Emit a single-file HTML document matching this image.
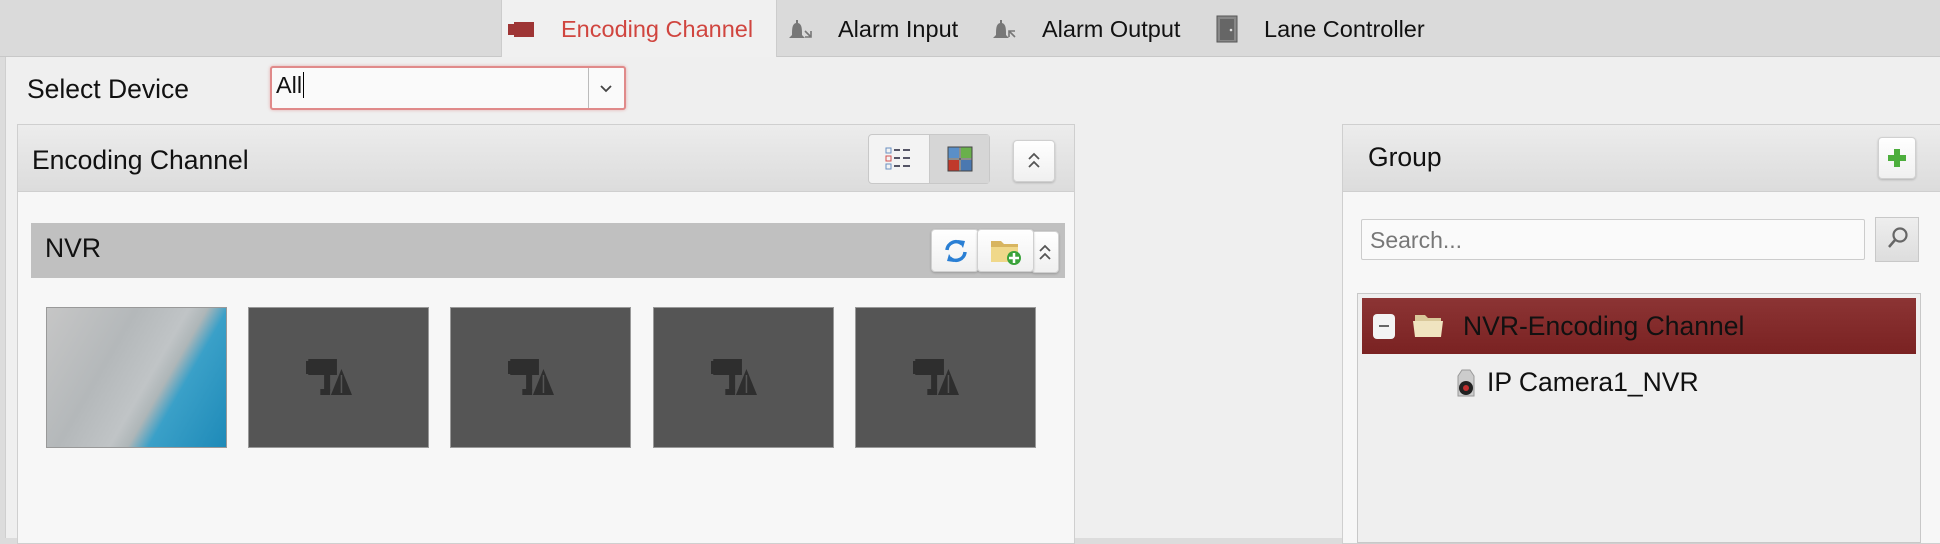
<!DOCTYPE html>
<html><head><meta charset="utf-8"><style>
*{box-sizing:border-box;margin:0;padding:0}
body{width:1940px;height:538px;overflow:hidden;background:#dcdcdc;font-family:"Liberation Sans",Arial,sans-serif;color:#111;position:relative}
.a{position:absolute}
.tabbar{left:0;top:0;width:1940px;height:57px;background:#dadada;border-bottom:1px solid #c8c8c8}
.tab{top:0;height:58px;background:#f0f0f0;left:501px;width:276px;border-left:1px solid #ccc;border-right:1px solid #ccc}
.t{font-size:26.5px;white-space:nowrap}
.tt{font-size:23.5px;white-space:nowrap}
.content{left:5px;top:57px;width:1935px;height:481px;background:#efefef;border-left:1px solid #cfcfcf}
.panel{border:1px solid #cfcfcf;background:#f7f7f7}
.hdr{background:linear-gradient(#ececec,#dcdcdc);border-bottom:1px solid #cfcfcf}
.btn{background:linear-gradient(#fff,#f0f0f0);border:1px solid #d0d0d0;border-radius:4px;box-shadow:0 1px 2px rgba(0,0,0,.2)}
.thumb{top:307px;width:181px;height:141px;background:#555;border:1px solid #999}
</style></head><body>
<div class="a tabbar"></div>
<div class="a tab"></div>
<svg class="a" style="left:506px;top:20px" width="32" height="20"><rect x="8" y="2" width="20" height="15" fill="#9e3535"/><rect x="2" y="4" width="6" height="11" fill="#9e3535"/></svg>
<div class="a tt" style="left:561px;top:16px;color:#d0453f">Encoding Channel</div>
<svg class="a" style="left:788px;top:17px" width="28" height="26"><path d="M8 3h2v3c4 1 4 6 4 12l3 3H1l3-3c0-6 0-11 4-12z" fill="#777"/><path d="M17 14l6 6M23 14v6h-6" stroke="#777" stroke-width="1.6" fill="none"/></svg>
<div class="a tt" style="left:838px;top:16px">Alarm Input</div>
<svg class="a" style="left:992px;top:17px" width="28" height="26"><path d="M8 3h2v3c4 1 4 6 4 12l3 3H1l3-3c0-6 0-11 4-12z" fill="#777"/><path d="M17 14l6 6M17 20v-6h6" stroke="#777" stroke-width="1.6" fill="none"/></svg>
<div class="a tt" style="left:1042px;top:16px">Alarm Output</div>
<svg class="a" style="left:1216px;top:15px" width="22" height="28"><rect x="1" y="1" width="20" height="26" fill="#888" stroke="#555"/><rect x="4" y="4" width="14" height="21" fill="#666"/><circle cx="15" cy="15" r="1.3" fill="#ddd"/></svg>
<div class="a tt" style="left:1264px;top:16px">Lane Controller</div>

<div class="a content"></div>
<div class="a t" style="left:27px;top:74px">Select Device</div>
<div class="a" style="left:270px;top:66px;width:356px;height:44px;background:#fafafa;border:2px solid #e08a8a;border-radius:3px;box-shadow:0 0 3px rgba(220,80,80,.4)"></div>
<div class="a tt" style="left:276px;top:72px">All<span style="border-left:1.5px solid #000;margin-left:1px"></span></div>
<div class="a" style="left:588px;top:68px;width:1px;height:40px;background:#bbb"></div>
<svg class="a" style="left:599px;top:84px" width="14" height="10"><path d="M2 2l5 5 5-5" stroke="#444" stroke-width="1.8" fill="none"/></svg>

<div class="a panel" style="left:17px;top:124px;width:1058px;height:420px"></div>
<div class="a hdr" style="left:18px;top:125px;width:1056px;height:67px"></div>
<div class="a t" style="left:32px;top:145px">Encoding Channel</div>
<div class="a" style="left:868px;top:134px;width:122px;height:50px;border:1px solid #c8c8c8;border-radius:4px;background:#f3f3f3"></div>
<div class="a" style="left:929px;top:135px;width:60px;height:48px;background:#d6d6d6;border-left:1px solid #c8c8c8"></div>
<svg class="a" style="left:884px;top:146px" width="30" height="26"><rect x="2" y="2" width="5" height="5" fill="none" stroke="#6a8fc0"/><rect x="2" y="10" width="5" height="5" fill="none" stroke="#d05050"/><rect x="2" y="18" width="5" height="5" fill="none" stroke="#6a8fc0"/><g stroke="#556" stroke-width="2"><path d="M10 4h6M19 4h7M10 12h6M19 12h7M10 20h6M19 20h7"/></g></svg>
<svg class="a" style="left:947px;top:146px" width="26" height="26"><rect x="1" y="1" width="11" height="11" fill="#5a8fc8"/><rect x="14" y="1" width="11" height="11" fill="#6ab04c"/><rect x="1" y="14" width="11" height="11" fill="#c0392b"/><rect x="14" y="14" width="11" height="11" fill="#4a78b0"/><path d="M1 1h24v24H1zM13 1v24M1 13h24" stroke="#444" fill="none"/></svg>
<div class="a btn" style="left:1013px;top:140px;width:42px;height:42px"></div>
<svg class="a" style="left:1026px;top:150px" width="16" height="22"><path d="M3 9l5-5 5 5M3 17l5-5 5 5" stroke="#555" stroke-width="1.8" fill="none"/></svg>

<div class="a" style="left:31px;top:223px;width:1034px;height:55px;background:#c0c0c0"></div>
<div class="a t" style="left:45px;top:233px">NVR</div>
<div class="a btn" style="left:1031px;top:231px;width:28px;height:42px"></div>
<svg class="a" style="left:1037px;top:242px" width="16" height="22"><path d="M3 9l5-5 5 5M3 17l5-5 5 5" stroke="#555" stroke-width="1.8" fill="none"/></svg>
<div class="a btn" style="left:931px;top:229px;width:48px;height:43px"></div>
<svg class="a" style="left:942px;top:237px" width="28" height="28"><path d="M5 13a9 9 0 0 1 15-6" stroke="#2a7fd4" stroke-width="3.5" fill="none"/><path d="M16 3l7 1-2 7z" fill="#2a7fd4"/><path d="M23 15a9 9 0 0 1-15 6" stroke="#2a7fd4" stroke-width="3.5" fill="none"/><path d="M12 25l-7-1 2-7z" fill="#2a7fd4"/></svg>
<div class="a btn" style="left:977px;top:229px;width:57px;height:43px"></div>
<svg class="a" style="left:989px;top:235px" width="34" height="32"><path d="M2 6h10l3 3h14v18H2z" fill="#d8b560"/><path d="M2 12h27v15H2z" fill="#f0d88a"/><circle cx="25" cy="23" r="7" fill="#3aa33a"/><path d="M25 18v10M20 23h10" stroke="#fff" stroke-width="2.5"/></svg>

<div class="a thumb" style="left:46px;background:linear-gradient(120deg,#c6c6c6 0%,#b4b8ba 35%,#c0c4c6 55%,#aeb6b8 62%,#3aa0c8 70%,#1e8ab8 100%)"></div>
<div class="a thumb" style="left:248px"></div>
<div class="a thumb" style="left:450px"></div>
<div class="a thumb" style="left:653px"></div>
<div class="a thumb" style="left:855px"></div>
<svg width="0" height="0" style="position:absolute"><defs><g id="nc" fill="#2e2e2e"><rect x="0" y="2" width="4" height="13"/><rect x="3" y="0" width="38" height="16"/><rect x="24" y="16" width="8" height="16"/><rect x="19" y="30" width="13" height="6"/><path d="M33 36l14-26 14 26z"/><path d="M47 16v18" stroke="#555" stroke-width="2"/></g></defs></svg>
<svg class="a" style="left:306px;top:359px" width="46" height="37" viewBox="0 0 61 37" preserveAspectRatio="none"><use href="#nc"/></svg>
<svg class="a" style="left:508px;top:359px" width="46" height="37" viewBox="0 0 61 37" preserveAspectRatio="none"><use href="#nc"/></svg>
<svg class="a" style="left:711px;top:359px" width="46" height="37" viewBox="0 0 61 37" preserveAspectRatio="none"><use href="#nc"/></svg>
<svg class="a" style="left:913px;top:359px" width="46" height="37" viewBox="0 0 61 37" preserveAspectRatio="none"><use href="#nc"/></svg>

<div class="a panel" style="left:1342px;top:124px;width:600px;height:420px"></div>
<div class="a hdr" style="left:1343px;top:125px;width:597px;height:67px"></div>
<div class="a t" style="left:1368px;top:142px">Group</div>
<div class="a btn" style="left:1878px;top:137px;width:38px;height:42px"></div>
<svg class="a" style="left:1886px;top:147px" width="22" height="22"><path d="M11 2v18M2 11h18" stroke="#4cae3c" stroke-width="6"/></svg>
<div class="a" style="left:1361px;top:219px;width:504px;height:41px;background:#fafafa;border:1px solid #ccc;border-radius:2px"></div>
<div class="a" style="left:1370px;top:227px;color:#777;font-size:23px">Search...</div>
<div class="a" style="left:1875px;top:217px;width:44px;height:45px;background:linear-gradient(#eee,#ddd);border:1px solid #c8c8c8"></div>
<svg class="a" style="left:1886px;top:226px" width="24" height="26"><circle cx="14" cy="9" r="6.5" stroke="#666" stroke-width="2.2" fill="none"/><path d="M9 14l-6 7" stroke="#666" stroke-width="2.5"/></svg>
<div class="a" style="left:1357px;top:293px;width:564px;height:250px;background:#efefef;border:1px solid #c8c8c8"></div>
<div class="a" style="left:1362px;top:298px;width:554px;height:56px;background:linear-gradient(#8c3434,#7a2222)"></div>
<div class="a" style="left:1373px;top:314px;width:22px;height:25px;background:#f3f3f3;border-radius:4px"></div>
<div class="a" style="left:1379px;top:325px;width:10px;height:2px;background:#666"></div>
<svg class="a" style="left:1412px;top:311px" width="34" height="28"><path d="M3 4h10l3 3h13v19H3z" fill="#d9c89a"/><path d="M1 10h30l-2 16H3z" fill="#f0e4c0"/></svg>
<div class="a t" style="left:1463px;top:311px;color:#111">NVR-Encoding Channel</div>
<svg class="a" style="left:1453px;top:368px" width="26" height="30"><path d="M5 8l4-6h8l4 6v20H5z" fill="#ccc" stroke="#999"/><circle cx="13" cy="20" r="7" fill="#222"/><circle cx="13" cy="20" r="3" fill="#c03030"/></svg>
<div class="a t" style="left:1487px;top:367px">IP Camera1_NVR</div>
</body></html>
